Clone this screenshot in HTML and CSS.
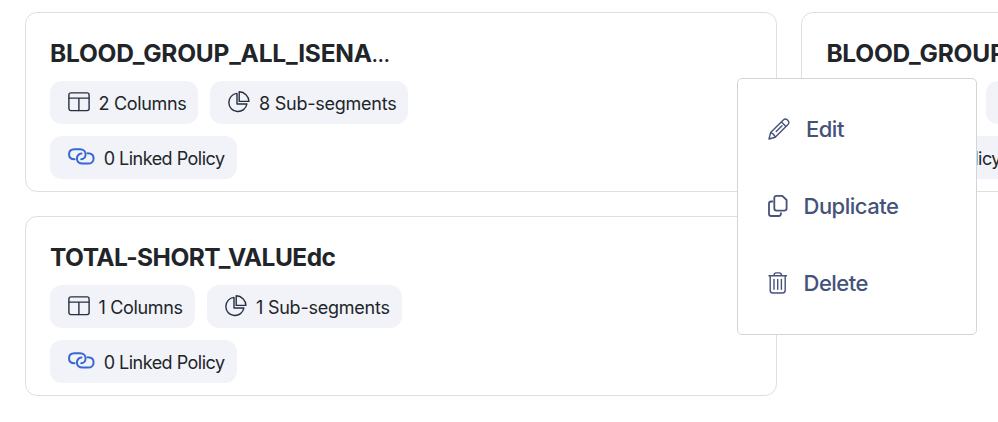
FILE: index.html
```
<!DOCTYPE html>
<html lang="en">
<head>
  <meta charset="UTF-8" />
  <meta name="viewport" content="width=device-width, initial-scale=1.0">
  <title>Segments</title>
  <link rel="stylesheet" href="styles.css">
</head>
<body>

  <!-- shared icons -->
  <svg class="sprite" width="0" height="0">
    <symbol id="icon-columns" viewBox="0 0 22 20">
      <rect x="0.9" y="0.9" width="20.2" height="17.7" rx="2"/>
      <path d="M1 6.1H21M10.9 6.1V18.6"/>
    </symbol>
    <symbol id="icon-pie" viewBox="0 0 22 22">
      <path d="M9 2.4A9.1 9.1 0 1 0 18.9 13H9Z"/>
      <path d="M11.2 0.8V10.4H20.9A9.8 9.8 0 0 0 11.2 0.8Z"/>
    </symbol>
    <symbol id="icon-link" viewBox="0 0 27 17">
      <path d="M6.6 11.2C3 11.2 1 9.2 1 6.2S3.2 1.2 6.5 1.2H12C15.5 1.2 17.6 3.4 17.6 6.2S15.6 11.2 13.2 11.2"/>
      <path d="M19.6 5.3C23.3 5.3 25.6 7.3 25.6 10.4S23.3 15.6 20 15.6H14.5C11 15.6 8.9 13.4 8.9 10.6S11 5.5 13.5 5.5"/>
    </symbol>
    <symbol id="icon-edit" viewBox="0 0 22 22">
      <path d="M1 21L2.6 14.6L15.6 1.7Q17.5 0.1 19.7 2.2Q21.8 4.4 20.2 6.3L7.2 19.3ZM2.6 14.6Q6 15.5 7.2 19.3M13.4 3.9L18 8.5M8.2 13.6L14 7.8"/>
    </symbol>
    <symbol id="icon-copy" viewBox="0 0 20 22">
      <path d="M8.6 0.9H14.3L18.6 5V13.3Q18.6 15.6 16.3 15.6H8.6Q6.3 15.6 6.3 13.3V3.2Q6.3 0.9 8.6 0.9Z"/>
      <path d="M4.4 6.5H3.3Q1 6.5 1 8.8V18.7Q1 21 3.3 21H10.6Q13 21 13 18.2"/>
    </symbol>
    <symbol id="icon-trash" viewBox="0 0 20 22">
      <path d="M1 3.8H18.5M6 3.6Q6 0.9 8.3 0.9H11.2Q13.5 0.9 13.5 3.6M2.2 3.8V18.2Q2.2 21 5 21H14.3Q17.2 21 17.2 18.2V3.8M6 7.5V17.2M9.7 7.5V17.2M13.4 7.5V17.2"/>
    </symbol>
  </svg>

  <div class="card-grid">
    <div class="card">
      <h2 class="card-title">BLOOD_GROUP_ALL_ISENA<span class="dots">…</span></h2>
      <div class="chips">
        <div class="chip chip-columns"><svg class="icon icon-columns"><use href="#icon-columns"/></svg><span>2 Columns</span></div>
        <div class="chip chip-segments"><svg class="icon icon-pie"><use href="#icon-pie"/></svg><span>8 Sub-segments</span></div>
        <div class="chip chip-policy"><svg class="icon icon-link"><use href="#icon-link"/></svg><span>0 Linked Policy</span></div>
      </div>
    </div>

    <div class="card">
      <h2 class="card-title">BLOOD_GROUP_ALL_ISENA<span class="dots">…</span></h2>
      <div class="chips">
        <div class="chip chip-columns"><svg class="icon icon-columns"><use href="#icon-columns"/></svg><span>2 Columns</span></div>
        <div class="chip chip-segments"><svg class="icon icon-pie"><use href="#icon-pie"/></svg><span>8 Sub-segments</span></div>
        <div class="chip chip-policy"><svg class="icon icon-link"><use href="#icon-link"/></svg><span>0 Linked Policy</span></div>
      </div>
    </div>

    <div class="card">
      <h2 class="card-title title-short">TOTAL-SHORT_VALUEdc</h2>
      <div class="chips">
        <div class="chip chip-columns narrow"><svg class="icon icon-columns"><use href="#icon-columns"/></svg><span>1 Columns</span></div>
        <div class="chip chip-segments narrow"><svg class="icon icon-pie"><use href="#icon-pie"/></svg><span>1 Sub-segments</span></div>
        <div class="chip chip-policy"><svg class="icon icon-link"><use href="#icon-link"/></svg><span>0 Linked Policy</span></div>
      </div>
    </div>
  </div>

  <div class="menu">
    <div class="menu-item"><svg class="icon menu-icon icon-edit"><use href="#icon-edit"/></svg><span>Edit</span></div>
    <div class="menu-item"><svg class="icon menu-icon icon-copy"><use href="#icon-copy"/></svg><span>Duplicate</span></div>
    <div class="menu-item"><svg class="icon menu-icon icon-trash"><use href="#icon-trash"/></svg><span>Delete</span></div>
  </div>

</body>
</html>
```
FILE: styles.css
```
* {
  box-sizing: border-box;
}

body {
  margin: 0;
  height: 422px;
  background: #fff;
  color: #212529;
  font-family: Inter, "Liberation Sans", sans-serif;
  overflow: hidden;
}

.sprite {
  position: absolute;
}

.card-grid {
  display: grid;
  grid-template-columns: 752px 752px;
  gap: 24px 24.4px;
  padding: 12px 25px;
  overflow: hidden;
}

.card {
  height: 180px;
  padding: 24px;
  border: 1px solid #dedfe1;
  border-radius: 12px;
  background: #fff;
}

.card-title {
  margin: 0 0 12px;
  height: 32px;
  font-size: 24.5px;
  font-weight: 700;
  line-height: 32px;
  letter-spacing: -0.23px;
  white-space: nowrap;
}

.title-short {
  letter-spacing: -0.52px;
}

.dots {
  font-size: 18px;
  letter-spacing: 0;
}

.chips {
  display: flex;
  flex-wrap: wrap;
  gap: 12px;
  width: 400px;
}

.chip {
  display: flex;
  align-items: center;
  height: 43px;
  padding-left: 18px;
  border-radius: 12px;
  background: #f2f3f8;
  font-size: 18px;
  white-space: nowrap;
}

.chip span {
  padding-top: 2px;
}

.chip-columns {
  width: 148px;
  letter-spacing: -0.33px;
}

.chip-columns.narrow {
  width: 145px;
}

.chip-segments {
  width: 198px;
  letter-spacing: -0.24px;
}

.chip-segments.narrow {
  width: 195px;
}

.chip-policy {
  width: 187px;
  letter-spacing: -0.52px;
}

.icon {
  flex: none;
  fill: none;
  stroke: #263043;
  stroke-width: 1.4;
  stroke-linecap: round;
  stroke-linejoin: round;
}

.icon-columns {
  width: 22px;
  height: 20px;
  margin: 0 9px 2px -0.5px;
}

.icon-pie {
  width: 22px;
  height: 22px;
  margin: 0 9px 2px 0;
}

.icon-link {
  width: 27px;
  height: 17px;
  margin: 0 9px 2px -0.3px;
  stroke: #3767d2;
  stroke-width: 2;
}

.menu {
  position: absolute;
  left: 737px;
  top: 78px;
  width: 240px;
  height: 257px;
  padding: 12px 0 0 30px;
  border: 1px solid #d5d5d7;
  border-radius: 5px;
  background: #fff;
}

.menu-item {
  display: flex;
  align-items: center;
  height: 77px;
  color: #455279;
  font-size: 22px;
  font-weight: 500;
  letter-spacing: -0.5px;
}

.menu-item span {
  margin-top: -1px;
}

.menu-icon {
  height: 22px;
  margin-bottom: 1px;
  stroke: #455279;
}

.icon-edit {
  width: 22px;
  margin-left: -0.5px;
  margin-right: 16.5px;
  margin-bottom: 2px;
}

.icon-copy {
  width: 20px;
  margin-left: -0.5px;
  margin-right: 16px;
  stroke-width: 1.8;
}

.icon-trash {
  width: 20px;
  margin-left: -0.5px;
  margin-right: 16px;
}
```
